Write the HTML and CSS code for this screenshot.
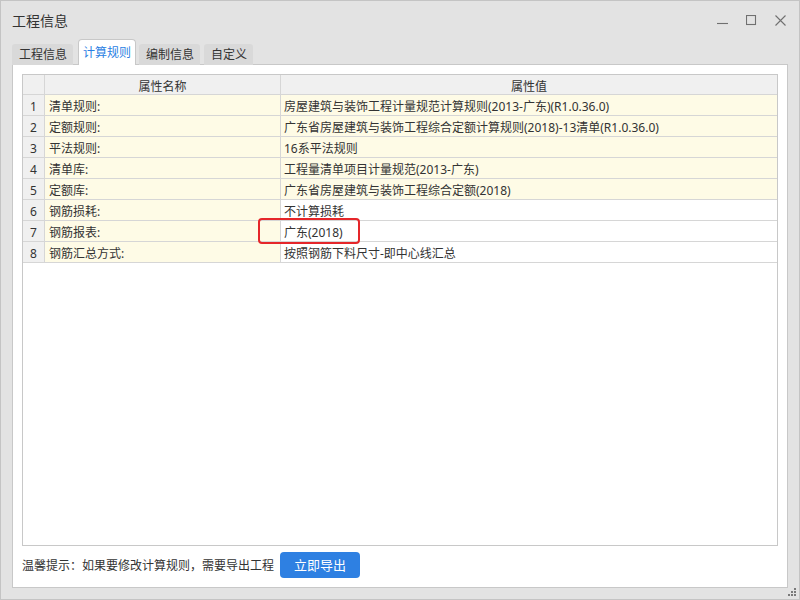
FILE: index.html
```html
<!DOCTYPE html>
<html lang="zh-CN">
<head>
<meta charset="utf-8">
<title>工程信息</title>
<link rel="stylesheet" href="styles.css">
</head>
<body>
<div class="window">
  <div class="titlebar">
    <div class="title">工程信息</div>
    <div class="controls">
      <svg class="ctl" width="11" height="11" viewBox="0 0 11 11"><path d="M0 8.5H11" /></svg>
      <svg class="ctl" width="11" height="11" viewBox="0 0 11 11"><rect x="0.5" y="0.5" width="9" height="9" /></svg>
      <svg class="ctl" width="11" height="11" viewBox="0 0 11 11"><path d="M0.5 0.5L10.5 10.5M10.5 0.5L0.5 10.5" /></svg>
    </div>
  </div>
  <div class="tabs">
    <div class="tab">工程信息</div>
    <div class="tab active">计算规则</div>
    <div class="tab">编制信息</div>
    <div class="tab">自定义</div>
  </div>
  <div class="panel">
    <div class="grid-wrap">
      <div class="grid">
        <div class="cell idx head"></div>
        <div class="cell head center">属性名称</div>
        <div class="cell head center last">属性值</div>

        <div class="cell idx">1</div>
        <div class="cell name">清单规则:</div>
        <div class="cell val yellow last">房屋建筑与装饰工程计量规范计算规则(2013-广东)(R1.0.36.0)</div>

        <div class="cell idx">2</div>
        <div class="cell name">定额规则:</div>
        <div class="cell val yellow last">广东省房屋建筑与装饰工程综合定额计算规则(2018)-13清单(R1.0.36.0)</div>

        <div class="cell idx">3</div>
        <div class="cell name">平法规则:</div>
        <div class="cell val yellow last">16系平法规则</div>

        <div class="cell idx">4</div>
        <div class="cell name">清单库:</div>
        <div class="cell val yellow last">工程量清单项目计量规范(2013-广东)</div>

        <div class="cell idx">5</div>
        <div class="cell name">定额库:</div>
        <div class="cell val yellow last">广东省房屋建筑与装饰工程综合定额(2018)</div>

        <div class="cell idx">6</div>
        <div class="cell name">钢筋损耗:</div>
        <div class="cell val last">不计算损耗</div>

        <div class="cell idx">7</div>
        <div class="cell name">钢筋报表:</div>
        <div class="cell val last">广东(2018)</div>

        <div class="cell idx">8</div>
        <div class="cell name">钢筋汇总方式:</div>
        <div class="cell val last">按照钢筋下料尺寸-即中心线汇总</div>
      </div>
      <div class="highlight"></div>
    </div>
    <div class="footer">
      <span class="tip">温馨提示：如果要修改计算规则，需要导出工程</span>
      <button class="btn">立即导出</button>
    </div>
  </div>
  <svg class="grip" width="8" height="8" viewBox="0 0 8 8">
    <rect x="6" y="0" width="2" height="2"/>
    <rect x="3" y="3" width="2" height="2"/>
    <rect x="6" y="3" width="2" height="2"/>
    <rect x="0" y="6" width="2" height="2"/>
    <rect x="3" y="6" width="2" height="2"/>
    <rect x="6" y="6" width="2" height="2"/>
  </svg>
</div>
</body>
</html>
```

FILE: styles.css
```css
* { box-sizing: border-box; }
html, body { margin: 0; padding: 0; }
body {
  font-family: "Noto Sans", "Noto Sans CJK SC", sans-serif;
  font-size: 12px;
  color: #333;
  background: #e3e3e3;
}
.window {
  position: relative;
  width: 800px;
  height: 600px;
  border: 1px solid #c4c4c4;
  background: #e3e3e3;
  display: flex;
  flex-direction: column;
}
.titlebar {
  height: 39px;
  flex: none;
  display: flex;
  align-items: center;
  justify-content: space-between;
  padding: 0 13px 0 11px;
}
.title {
  font-size: 14px;
  color: #333;
  line-height: 20px;
  padding-top: 1px;
}
.controls {
  display: flex;
  align-items: center;
  gap: 18px;
  margin-top: -1px;
}
.ctl {
  display: block;
  fill: none;
  stroke: #707070;
  stroke-width: 1.1;
}
.tabs {
  flex: none;
  height: 25px;
  display: flex;
  align-items: flex-end;
  padding-left: 11px;
  position: relative;
  z-index: 2;
  margin-bottom: -1px;
}
.tab {
  height: 21px;
  line-height: 22px;
  padding: 0 6px 0 7px;
  margin-right: 4px;
  background: #d9d9d9;
  border-radius: 3px 3px 0 0;
  color: #333;
  font-size: 12px;
}
.tab.active {
  height: 26px;
  line-height: 25px;
  padding: 0 4px;
  margin-left: 1px;
  margin-right: 3px;
  background: #fff;
  border: 1px solid #c8c8c8;
  border-bottom: none;
  border-radius: 4px 4px 0 0;
  color: #2b7fe3;
}
.panel {
  flex: 1;
  margin: 0 11px 11px;
  background: #fff;
  border: 1px solid #c8c8c8;
  padding: 9px 9px 0 9px;
  display: flex;
  flex-direction: column;
  min-height: 0;
}
.grid-wrap {
  position: relative;
  flex: 1;
  border: 1px solid #c8c8c8;
}
.grid {
  display: grid;
  grid-template-columns: 22px 236px 1fr;
  grid-template-rows: 20px;
  grid-auto-rows: 21px;
}
.cell {
  border-right: 1px solid #d6d6d6;
  border-bottom: 1px solid #d6d6d6;
  line-height: 24px;
  padding-left: 4px;
  white-space: nowrap;
  overflow: hidden;
  font-size: 12px;
}
.cell.last { border-right: none; }
.cell.head {
  background: #f0f0f0;
  line-height: 23px;
}
.center { text-align: center; padding-left: 0; }
.idx {
  background: #f0f0f0;
  text-align: center;
  padding-left: 0;
}
.name { background: #fefbe6; }
.yellow { background: #fefbe6; }
.val { padding-left: 3px; }
.highlight {
  position: absolute;
  left: 235px;
  top: 143px;
  width: 102px;
  height: 26px;
  border: 2px solid #e5262a;
  border-radius: 4px;
}
.footer {
  flex: none;
  height: 41px;
  display: flex;
  align-items: flex-start;
  padding-top: 6px;
  gap: 6px;
}
.tip {
  line-height: 27px;
  color: #333;
  font-size: 12px;
}
.btn {
  width: 80px;
  height: 26px;
  border: none;
  border-radius: 4px;
  background: #2e80e2;
  color: #fff;
  font-family: "Noto Sans", "Noto Sans CJK SC", sans-serif;
  font-size: 13px;
  line-height: 26px;
  padding: 0;
}
.grip {
  position: absolute;
  right: 3px;
  bottom: 3px;
  fill: #7a7a7a;
}
```
